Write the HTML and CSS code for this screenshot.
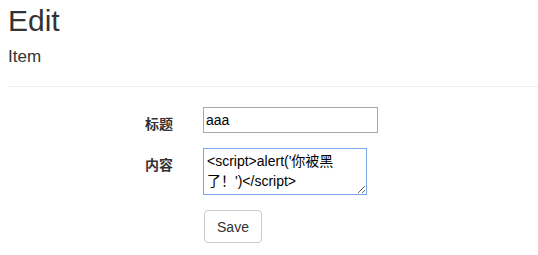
FILE: index.html
```html
<!DOCTYPE html>
<html lang="zh">
<head>
  <meta charset="UTF-8" />
  <title>Edit</title>
  <link rel="stylesheet" href="styles.css">
</head>
<body>
  <h1 class="page-title">Edit</h1>
  <h4 class="page-sub">Item</h4>
  <hr class="divider" />

  <form class="edit-form">
    <div class="form-row">
      <label class="form-label">标题</label>
      <input class="form-input" type="text" value="aaa" />
    </div>
    <div class="form-row">
      <label class="form-label">内容</label>
      <textarea class="form-text">&lt;script&gt;alert('你被黑了！')&lt;/script&gt;</textarea>
    </div>
    <div class="form-row">
      <span class="form-label"></span>
      <button class="btn" type="button">Save</button>
    </div>
  </form>
</body>
</html>
```

FILE: styles.css
```css
* {
  box-sizing: border-box;
}

body {
  margin: 0;
  padding: 4px 0 0 8px;
  font-family: 'Liberation Sans', Arial, 'Noto Sans CJK SC', sans-serif;
  font-size: 14px;
  color: #333;
  background: #fff;
}

.page-title {
  margin: 0;
  font-size: 30px;
  font-weight: normal;
  line-height: 33px;
}

.page-sub {
  margin: 10px 0 0 0;
  font-size: 17px;
  font-weight: normal;
  line-height: 20px;
}

.divider {
  margin: 19px 0 0 0;
  border: 0;
  border-top: 1px solid #eee;
}

.edit-form {
  padding-top: 20px;
}

.form-row {
  display: flex;
  align-items: flex-start;
  gap: 30px;
  margin-bottom: 15px;
}

.form-label {
  width: 165px;
  text-align: right;
  font-weight: bold;
  padding-top: 8px;
  line-height: 18px;
  font-family: 'Liberation Sans', 'Noto Sans CJK SC', sans-serif;
}

.form-input {
  width: 175px;
  height: 26px;
  margin: 0;
  padding: 1px 2px;
  border: 1px solid #a9a9a9;
  font-family: 'Liberation Sans', Arial, sans-serif;
  font-size: 14px;
  color: #000;
}

.form-text {
  width: 164px;
  height: 47px;
  margin: 0;
  padding: 2px 3px;
  border: 1px solid #7aa5e6;
  outline: none;
  font-family: 'Liberation Sans', Arial, 'Noto Sans CJK SC', sans-serif;
  font-size: 14px;
  line-height: 20px;
  color: #000;
  resize: both;
}

.btn {
  width: 58px;
  height: 33px;
  margin: 0 0 0 1px;
  padding: 6px 12px;
  background: #fff;
  border: 1px solid #ccc;
  border-radius: 4px;
  font-family: 'Liberation Sans', Arial, sans-serif;
  font-size: 14px;
  color: #333;
}
```
